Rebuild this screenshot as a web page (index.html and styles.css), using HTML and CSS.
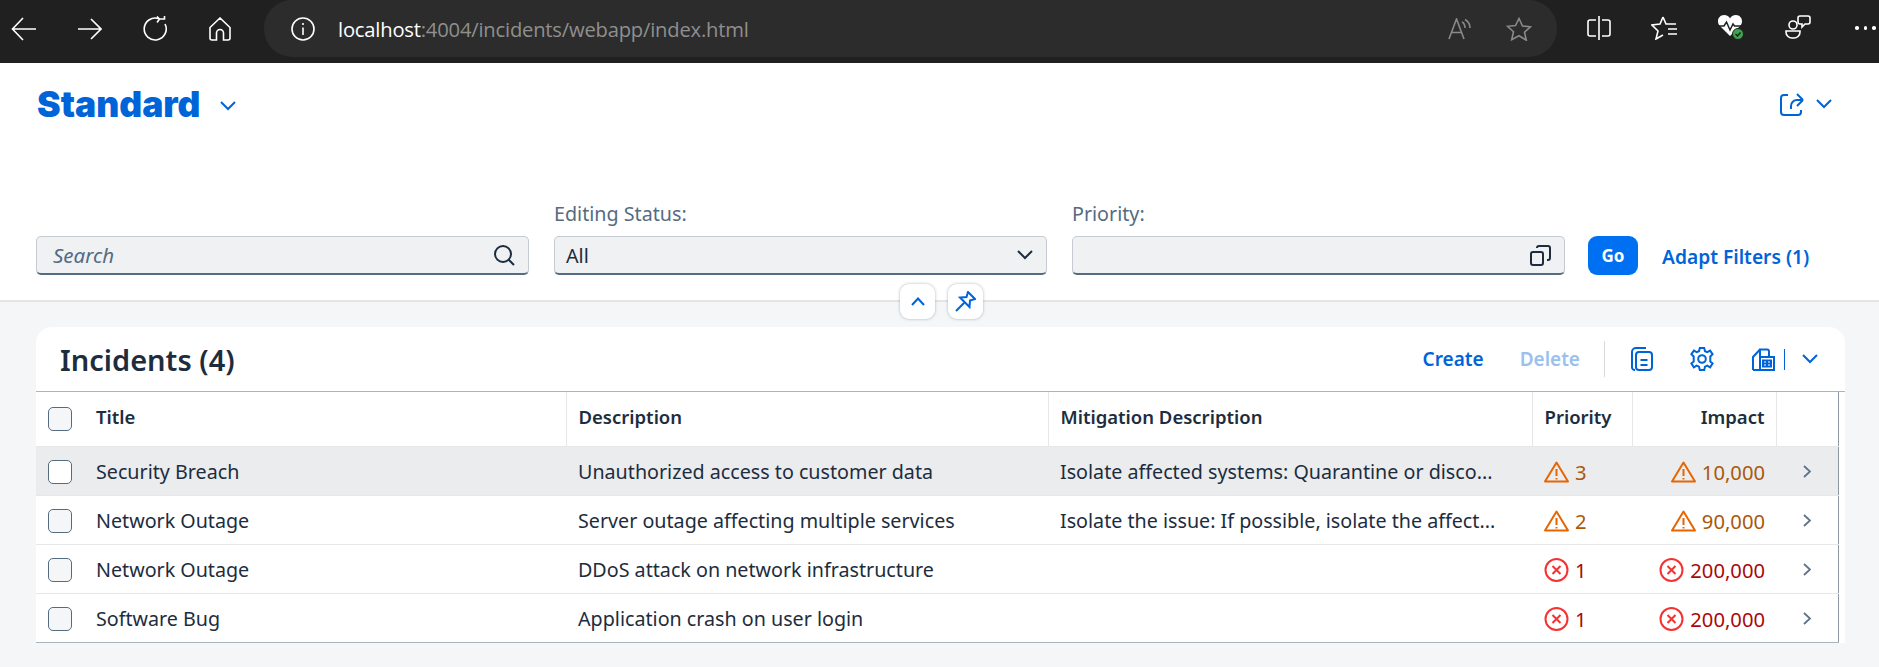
FILE: index.html
```html
<!DOCTYPE html>
<html lang="en">
<head>
    <meta charset="UTF-8">
    <title>Incidents</title>
    <link rel="stylesheet" href="styles.css">
</head>
<body>
    <div class="browser">
        <div class="nav-icons">
            <svg width="26" height="24" viewBox="0 0 26 24"><path d="M25 12H1.5M12 1 1.5 12 12 23"/></svg>
            <svg width="24" height="24" viewBox="0 0 24 24"><path d="M0 12h23M13 2l10 10-10 10"/></svg>
            <svg width="24" height="25" viewBox="0 0 24 25"><path d="M15.500 2.500A11 11 0 1 0 22 8M14 .5l2.500 2.500-2.500 3.500M16.500 3h5V-1"/></svg>
            <svg width="24" height="24" viewBox="0 0 24 24"><path d="M12 1 2 10.500V21a2 2 0 0 0 2 2h4.500v-7a3.500 3.500 0 0 1 7 0v7H20a2 2 0 0 0 2-2V10.500z"/></svg>
        </div>
        <div class="address">
            <svg width="24" height="24" viewBox="0 0 24 24"><circle cx="12" cy="12" r="11"/><path d="M12 10.500V18M12 6v2"/></svg>
            <div class="url">localhost<span class="url-rest">:4004/incidents/webapp/index.html</span></div>
            <div class="address-end">
                <svg class="dim" width="24" height="22" viewBox="0 0 24 22"><path d="M1 21 8.500 1 16 21M3.500 14.500h10M14 4c2 1 3 3 3 6M17 1.500c2.500 1.500 5 4.500 5 8.500"/></svg>
                <svg class="dim" width="26" height="24" viewBox="0 0 26 24"><path d="m13 1.500 3.500 7.500 8 .8-6 5.400 1.800 8L13 18.700 5.700 22.700l1.800-8-6-5.400 8-.8z"/></svg>
            </div>
        </div>
        <div class="tool-icons">
            <svg width="24" height="26" viewBox="0 0 24 26"><path d="M12 1v24M9 5H3a2 2 0 0 0-2 2v12a2 2 0 0 0 2 2h6M15 5h6a2 2 0 0 1 2 2v12a2 2 0 0 1-2 2h-6"/></svg>
            <svg width="26" height="24" viewBox="0 0 26 24"><path d="m12 1 3 7h10M12 1 9 8l-8 1 6 6-2 8 7-4M17 13h9M17 18h9"/></svg>
            <svg class="heart" width="28" height="28" viewBox="0 0 28 28"><path class="solid" d="M13 22 2.500 11.500C-1 7 2 1 7 1c3 0 5 1.500 6 3.500C14 2.500 16 1 19 1c5 0 8 6 4.500 10.500z"/><path class="beat" d="M0 12h7l2.500-4 3.500 8 3-6 1.500 2H26"/><circle class="ok" cx="21" cy="20" r="5.500"/><path class="tick" d="m18.500 20 2 2 3-3.500"/></svg>
            <svg width="26" height="26" viewBox="0 0 26 26"><circle cx="8" cy="10" r="4"/><path d="M1 16h14v1a6 6 0 0 1-6 6H7a6 6 0 0 1-6-6zM15 1h8a2 2 0 0 1 2 2v4a2 2 0 0 1-2 2h-3l-3 3V9h-2a2 2 0 0 1-2-2V3a2 2 0 0 1 2-2z"/></svg>
            <div class="dots"><span></span><span></span><span></span></div>
        </div>
    </div>

    <div class="top-area">
        <div class="head-row">
            <h1>Standard</h1>
            <svg class="blue-icon variant-chev" width="16" height="10" viewBox="0 0 16 10"><path d="m1 1 7 7 7-7"/></svg>
            <div class="share">
                <svg class="blue-icon" width="25" height="24" viewBox="0 0 25 24"><path d="M8 3H4a3 3 0 0 0-3 3v14a3 3 0 0 0 3 3h14a3 3 0 0 0 3-3v-2M23 8l-6-6M23 8l-6 6M23 8h-6a6 6 0 0 0-6 6v3"/></svg>
                <svg class="blue-icon" width="16" height="10" viewBox="0 0 16 10"><path d="m1 1 7 7 7-7"/></svg>
            </div>
        </div>
        <div class="filters">
            <div class="filter">
                <div class="field">
                    <span class="placeholder">Search</span>
                    <svg class="dark-icon" width="21" height="21" viewBox="0 0 21 21"><circle cx="9" cy="9" r="8"/><path d="m14.500 14.500 5.500 5.500"/></svg>
                </div>
            </div>
            <div class="filter">
                <label>Editing Status:</label>
                <div class="field">
                    <span>All</span>
                    <svg class="dark-icon" width="16" height="10" viewBox="0 0 16 10"><path d="m1 1 7 7 7-7"/></svg>
                </div>
            </div>
            <div class="filter">
                <label>Priority:</label>
                <div class="field">
                    <span></span>
                    <svg class="dark-icon" width="21" height="21" viewBox="0 0 21 21"><rect x="1" y="7" width="12" height="13" rx="2"/><path d="M7 3V3a2 2 0 0 1 2-2h9a2 2 0 0 1 2 2v10a2 2 0 0 1-2 2h-1"/></svg>
                </div>
            </div>
            <button class="go">Go</button>
            <a class="adapt">Adapt Filters (1)</a>
        </div>
        <div class="collapse-btns">
            <div class="mini-btn"><svg class="blue-icon" width="14" height="9" viewBox="0 0 14 9"><path d="M1 8l6-6.500L13 8"/></svg></div>
            <div class="mini-btn"><svg class="blue-icon" width="21" height="21" viewBox="0 0 21 21"><path d="m13 1 7 7-5 1.500-.5 6.500L5 6.500 11.500 6zM9 12l-8 8"/></svg></div>
        </div>
    </div>

    <div class="content">
        <div class="card">
            <div class="card-bar">
                <h2>Incidents (4)</h2>
                <div class="actions">
                    <a class="action">Create</a>
                    <a class="action disabled">Delete</a>
                    <span class="sep"></span>
                    <svg class="blue-icon" width="23" height="24" viewBox="0 0 23 24"><path d="M5 23a3 3 0 0 1-3-2V5a4 4 0 0 1 4-4h10"/><rect x="6" y="5" width="16" height="18" rx="3"/><path d="M10.500 13h7M10.500 18h7"/></svg>
                    <svg class="blue-icon" width="24" height="24" viewBox="0 0 24 24"><circle cx="12" cy="12" r="3.800"/><path d="M9.800 1h4.400l.8 3.200 2.300 1 2.800-1.600 2.500 3.500-2.300 2.400v5l2.300 2-2.500 3.800-2.800-1.600-2.300 1-.8 3.300H9.800L9 19.700l-2.300-1-2.800 1.600-2.500-3.800 2.300-2v-5L1.400 7.100l2.500-3.500 2.800 1.600 2.300-1z"/></svg>
                    <div class="table-tools">
                        <svg class="blue-icon" width="24" height="24" viewBox="0 0 24 24"><path d="M9 10V2.500h7a2 2 0 0 1 2 2V10M2 23V10l7-7.500M2 23h21V10H9v13"/><path d="M12 13.500h8v6h-8zM12 16.500h8M16 13.500v6"/></svg>
                        <span class="blue-sep"></span>
                        <svg class="blue-icon" width="16" height="10" viewBox="0 0 16 10"><path d="m1 1 7 7 7-7"/></svg>
                    </div>
                </div>
            </div>
            <table class="incidents">
                <colgroup>
                    <col class="c-title"><col class="c-desc"><col class="c-mit"><col class="c-prio"><col class="c-imp"><col class="c-nav">
                </colgroup>
                <thead>
                    <tr>
                        <th class="title-cell"><div class="title-wrap"><span class="check header-check"></span>Title</div></th>
                        <th>Description</th>
                        <th>Mitigation Description</th>
                        <th>Priority</th>
                        <th class="num">Impact</th>
                        <th></th>
                    </tr>
                </thead>
                <tbody>
                    <tr class="hover">
                        <td class="title-cell"><div class="title-wrap"><span class="check"></span>Security Breach</div></td>
                        <td>Unauthorized access to customer data</td>
                        <td class="clip">Isolate affected systems: Quarantine or disco...</td>
                        <td class="warn"><div class="status"><svg width="25" height="22" viewBox="0 0 25 22"><path d="M12.500 1.500 1 20.500h23zM12.500 8v7M12.500 17v1.500"/></svg>3</div></td>
                        <td class="warn num"><div class="status"><svg width="25" height="22" viewBox="0 0 25 22"><path d="M12.500 1.500 1 20.500h23zM12.500 8v7M12.500 17v1.500"/></svg>10,000</div></td>
                        <td class="nav"><svg width="8" height="13" viewBox="0 0 8 13"><path d="m1 1 6 5.500L1 12"/></svg></td>
                    </tr>
                    <tr>
                        <td class="title-cell"><div class="title-wrap"><span class="check"></span>Network Outage</div></td>
                        <td>Server outage affecting multiple services</td>
                        <td class="clip">Isolate the issue: If possible, isolate the affect...</td>
                        <td class="warn"><div class="status"><svg width="25" height="22" viewBox="0 0 25 22"><path d="M12.500 1.500 1 20.500h23zM12.500 8v7M12.500 17v1.500"/></svg>2</div></td>
                        <td class="warn num"><div class="status"><svg width="25" height="22" viewBox="0 0 25 22"><path d="M12.500 1.500 1 20.500h23zM12.500 8v7M12.500 17v1.500"/></svg>90,000</div></td>
                        <td class="nav"><svg width="8" height="13" viewBox="0 0 8 13"><path d="m1 1 6 5.500L1 12"/></svg></td>
                    </tr>
                    <tr>
                        <td class="title-cell"><div class="title-wrap"><span class="check"></span>Network Outage</div></td>
                        <td>DDoS attack on network infrastructure</td>
                        <td></td>
                        <td class="err"><div class="status"><svg width="25" height="24" viewBox="0 0 25 24"><circle cx="12.500" cy="12" r="11"/><path d="m8.500 8 8 8M16.500 8l-8 8"/></svg>1</div></td>
                        <td class="err num"><div class="status"><svg width="25" height="24" viewBox="0 0 25 24"><circle cx="12.500" cy="12" r="11"/><path d="m8.500 8 8 8M16.500 8l-8 8"/></svg>200,000</div></td>
                        <td class="nav"><svg width="8" height="13" viewBox="0 0 8 13"><path d="m1 1 6 5.500L1 12"/></svg></td>
                    </tr>
                    <tr>
                        <td class="title-cell"><div class="title-wrap"><span class="check"></span>Software Bug</div></td>
                        <td>Application crash on user login</td>
                        <td></td>
                        <td class="err"><div class="status"><svg width="25" height="24" viewBox="0 0 25 24"><circle cx="12.500" cy="12" r="11"/><path d="m8.500 8 8 8M16.500 8l-8 8"/></svg>1</div></td>
                        <td class="err num"><div class="status"><svg width="25" height="24" viewBox="0 0 25 24"><circle cx="12.500" cy="12" r="11"/><path d="m8.500 8 8 8M16.500 8l-8 8"/></svg>200,000</div></td>
                        <td class="nav"><svg width="8" height="13" viewBox="0 0 8 13"><path d="m1 1 6 5.500L1 12"/></svg></td>
                    </tr>
                </tbody>
            </table>
        </div>
    </div>
</body>
</html>
```

FILE: styles.css
```css
* {
    box-sizing: border-box;
}
html, body {
    height: 100%;
}
body {
    margin: 0;
    display: flex;
    flex-direction: column;
    overflow: hidden;
    font-family: "Noto Sans", sans-serif;
    font-size: 19.7px;
    color: #1d2d3e;
    background: #f5f6f7;
}
svg {
    display: block;
    flex: none;
    fill: none;
}

/* browser chrome */
.browser {
    height: 63px;
    flex: none;
    display: flex;
    background: #202020;
}
.browser svg {
    stroke: #fff;
    stroke-width: 1.6;
}
.browser svg.dim {
    stroke: #8a8a8a;
}
.nav-icons {
    width: 264px;
    flex: none;
    padding: 0 0 6px 11px;
    display: flex;
    align-items: center;
    gap: 41px;
}
.address {
    width: 1293px;
    height: 57px;
    flex: none;
    display: flex;
    align-items: center;
    padding: 0 25px 0 27px;
    border-radius: 28px;
    background: #2c2c2c;
}
.url {
    margin-left: 23px;
    color: #fff;
    font-family: "Open Sans", sans-serif;
    font-size: 20.2px;
    letter-spacing: -0.2px;
}
.url-rest {
    color: #8f8f8f;
}
.address-end {
    margin-left: auto;
    display: flex;
    align-items: center;
    gap: 34px;
}
.tool-icons {
    flex: 1;
    padding: 0 7px 7px 30px;
    display: flex;
    align-items: center;
    gap: 40px;
}
.heart .solid {
    fill: #fff;
    stroke: none;
}
.browser .heart .beat {
    stroke: #202020;
    stroke-width: 1.5;
}
.browser .heart .ok {
    fill: #3fa34d;
    stroke: #202020;
    stroke-width: 1;
}
.browser .heart .tick {
    stroke: #202020;
    stroke-width: 1.500;
}
.dots {
    display: flex;
    gap: 5px;
    margin-left: 4px;
}
.dots span {
    width: 3.500px;
    height: 3.500px;
    border-radius: 50%;
    background: #fff;
}

/* page variant + filter bar */
.top-area {
    position: relative;
    height: 239px;
    flex: none;
    display: flex;
    flex-direction: column;
    padding: 0 47px 25px 36px;
    background: #fff;
    border-bottom: 2px solid #e3e5e7;
}
.blue-icon {
    stroke: #0064d9;
    stroke-width: 2;
}
.dark-icon {
    stroke: #1d2d3e;
    stroke-width: 2;
}
.head-row {
    display: flex;
    align-items: center;
    height: 40px;
    margin-top: 21px;
}
h1 {
    margin: 0 0 0 1px;
    font-family: "Inter", sans-serif;
    font-size: 35.5px;
    font-weight: 900;
    color: #0064d9;
}
.variant-chev {
    margin: 4px 0 0 19px;
}
.share {
    margin-left: auto;
    display: flex;
    align-items: center;
    gap: 11px;
}
.filters {
    margin-top: auto;
    display: flex;
    align-items: flex-end;
    gap: 25px;
}
.filter {
    width: 493px;
    display: flex;
    flex-direction: column;
}
.filter label {
    margin-bottom: 10px;
    color: #556b82;
    line-height: 24px;
}
.field {
    height: 39px;
    display: flex;
    align-items: center;
    justify-content: space-between;
    padding: 0 13px 0 16px;
    background: #eff1f2;
    border: 1px solid #c5cbd1;
    border-bottom: 2px solid #556b81;
    border-radius: 5px;
}
.filter:nth-child(2) .field {
    padding-left: 11px;
}
.placeholder {
    font-size: 20.5px;
    font-style: italic;
    color: #556b82;
}
.go {
    width: 50px;
    height: 39px;
    margin-left: -2px;
    border: none;
    border-radius: 9px;
    background: #0070f2;
    color: #fff;
    font-family: inherit;
    font-size: 17px;
    font-weight: 700;
}
.adapt {
    line-height: 37px;
    margin-left: -1px;
    color: #0064d9;
    font-size: 19.2px;
    font-weight: 600;
}
.collapse-btns {
    position: absolute;
    left: 900px;
    top: 221px;
    display: flex;
    gap: 13px;
}
.mini-btn {
    width: 35px;
    height: 35px;
    display: flex;
    align-items: center;
    justify-content: center;
    background: #fff;
    border-radius: 9px;
    box-shadow: 0 0 3px rgba(85, 107, 130, 0.5);
}

/* table card */
.content {
    padding: 25px 34px 0 36px;
}
.card {
    background: #fff;
    border-radius: 16px 16px 0 0;
}
.card-bar {
    height: 65px;
    display: flex;
    align-items: center;
    justify-content: space-between;
    padding: 0 27px 0 24px;
    border-bottom: 1px solid #a9b4be;
}
h2 {
    margin: 0;
    font-size: 29px;
    font-weight: 600;
}
.actions {
    display: flex;
    align-items: center;
}
.action {
    margin-right: 36px;
    color: #0064d9;
    font-size: 19px;
    font-weight: 600;
}
.action.disabled {
    margin-right: 24px;
    color: #99c1f0;
}
.sep {
    width: 1px;
    height: 36px;
    margin-right: 25px;
    background: #d9d9d9;
}
.actions > svg {
    margin-right: 37px;
}
.table-tools {
    display: flex;
    align-items: center;
}
.blue-sep {
    width: 1px;
    height: 21px;
    margin: 0 17px 0 9px;
    background: #0064d9;
}
.incidents {
    width: 1802px;
    table-layout: fixed;
    border-collapse: collapse;
    border-right: 1px solid #8d98a3;
    border-bottom: 1px solid #a9b4be;
}
.c-title { width: 530px; }
.c-desc { width: 482px; }
.c-mit { width: 484px; }
.c-prio { width: 100px; }
.c-imp { width: 144px; }
.c-nav { width: 62px; }
th {
    height: 54px;
    padding: 0 11px 5px 12px;
    text-align: left;
    font-size: 18.5px;
    font-weight: 600;
    border-left: 1px solid #e5e7e9;
    border-bottom: 1px solid #e5e7e9;
}
th.title-cell {
    border-left: none;
}
td {
    height: 49px;
    padding: 2px 11px 0 12px;
    border-bottom: 1px solid #e5e7e9;
    white-space: nowrap;
    overflow: hidden;
}
tbody tr:last-child td {
    border-bottom: none;
}
.hover td {
    background: #ebecee;
}
.title-cell {
    padding-left: 12px;
}
.title-wrap {
    display: flex;
    align-items: center;
    gap: 24px;
}
.check {
    width: 24px;
    height: 24px;
    flex: none;
    background: #f5f6f7;
    border: 1px solid #556b82;
    border-radius: 5px;
}
.header-check {
    margin-top: 5px;
}
.hover .check {
    background: #fff;
}
.num {
    text-align: right;
}
.status {
    display: flex;
    align-items: center;
    gap: 6px;
    font-size: 20.2px;
}
.num .status {
    justify-content: flex-end;
}
.warn {
    color: #aa5808;
}
.warn svg {
    stroke: #e76500;
    stroke-width: 2;
    stroke-linejoin: round;
}
.err {
    color: #aa0808;
}
.err svg {
    stroke: #f53232;
    stroke-width: 2;
}
.nav svg {
    margin-left: 15px;
    stroke: #5e7288;
    stroke-width: 1.800;
}
```
